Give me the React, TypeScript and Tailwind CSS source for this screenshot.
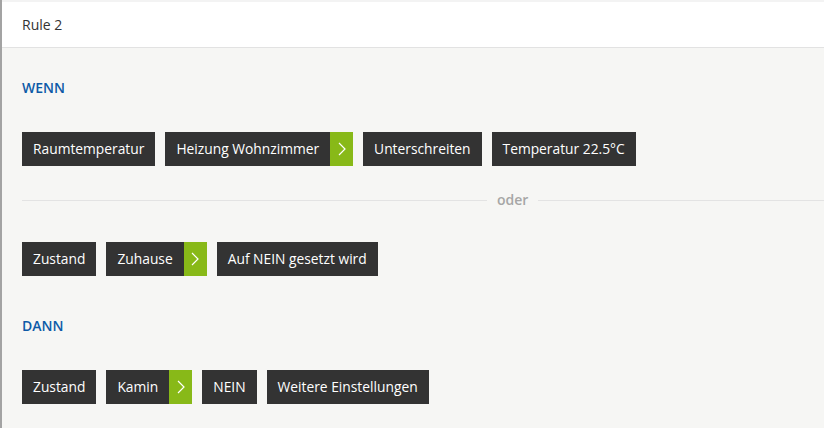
import React from 'react';

type ChipProps = { label: string; arrow?: boolean };

function Chip({ label, arrow }: ChipProps) {
  return (
    <div className="flex h-[34px] bg-[#333333] text-white text-[13.8px]">
      <span className="flex items-center px-[11px]">{label}</span>
      {arrow && (
        <span className="flex w-[23px] items-center justify-center bg-[#88b918]">
          <svg width="8" height="14" viewBox="0 0 8 14" fill="none">
            <path d="M1 1l6 6-6 6" stroke="white" strokeWidth="1.2" />
          </svg>
        </span>
      )}
    </div>
  );
}

function Row({ chips }: { chips: ChipProps[] }) {
  return (
    <div className="flex gap-[10px]">
      {chips.map((c, i) => (
        <Chip key={i} {...c} />
      ))}
    </div>
  );
}

function App() {
  return (
    <div
      className="h-[428px] w-[824px] overflow-hidden border-l-2 border-[#a3a3a3] bg-[#f6f6f4] text-[#333]"
      style={{ fontFamily: '"Open Sans", "Noto Sans", sans-serif' }}
    >
      <div className="h-[2px] bg-[#f3f3f3]" />
      <div className="flex h-[46px] items-center border-b border-[#e2e2e2] bg-white px-5 text-[14px]">
        Rule 2
      </div>

      <div className="px-5">
        <h2 className="mt-[31px] text-[14px] font-semibold text-[#0d5aa7] leading-[18px]">WENN</h2>

        <div className="mt-[35px]">
          <Row
            chips={[
              { label: 'Raumtemperatur' },
              { label: 'Heizung Wohnzimmer', arrow: true },
              { label: 'Unterschreiten' },
              { label: 'Temperatur 22.5°C' },
            ]}
          />
        </div>

        <div className="mt-[26px] flex items-center gap-[10px] -mr-5">
          <div className="h-px w-[465px] bg-[#e3e3e3]" />
          <span className="text-[14px] font-semibold text-[#a6a6a6] leading-[16px]">oder</span>
          <div className="h-px flex-1 bg-[#e3e3e3]" />
        </div>

        <div className="mt-[34px]">
          <Row
            chips={[
              { label: 'Zustand' },
              { label: 'Zuhause', arrow: true },
              { label: 'Auf NEIN gesetzt wird' },
            ]}
          />
        </div>

        <h2 className="mt-[41px] text-[14px] font-semibold text-[#0d5aa7] leading-[18px]">DANN</h2>

        <div className="mt-[35px]">
          <Row
            chips={[
              { label: 'Zustand' },
              { label: 'Kamin', arrow: true },
              { label: 'NEIN' },
              { label: 'Weitere Einstellungen' },
            ]}
          />
        </div>
      </div>
    </div>
  );
}

export default App;
